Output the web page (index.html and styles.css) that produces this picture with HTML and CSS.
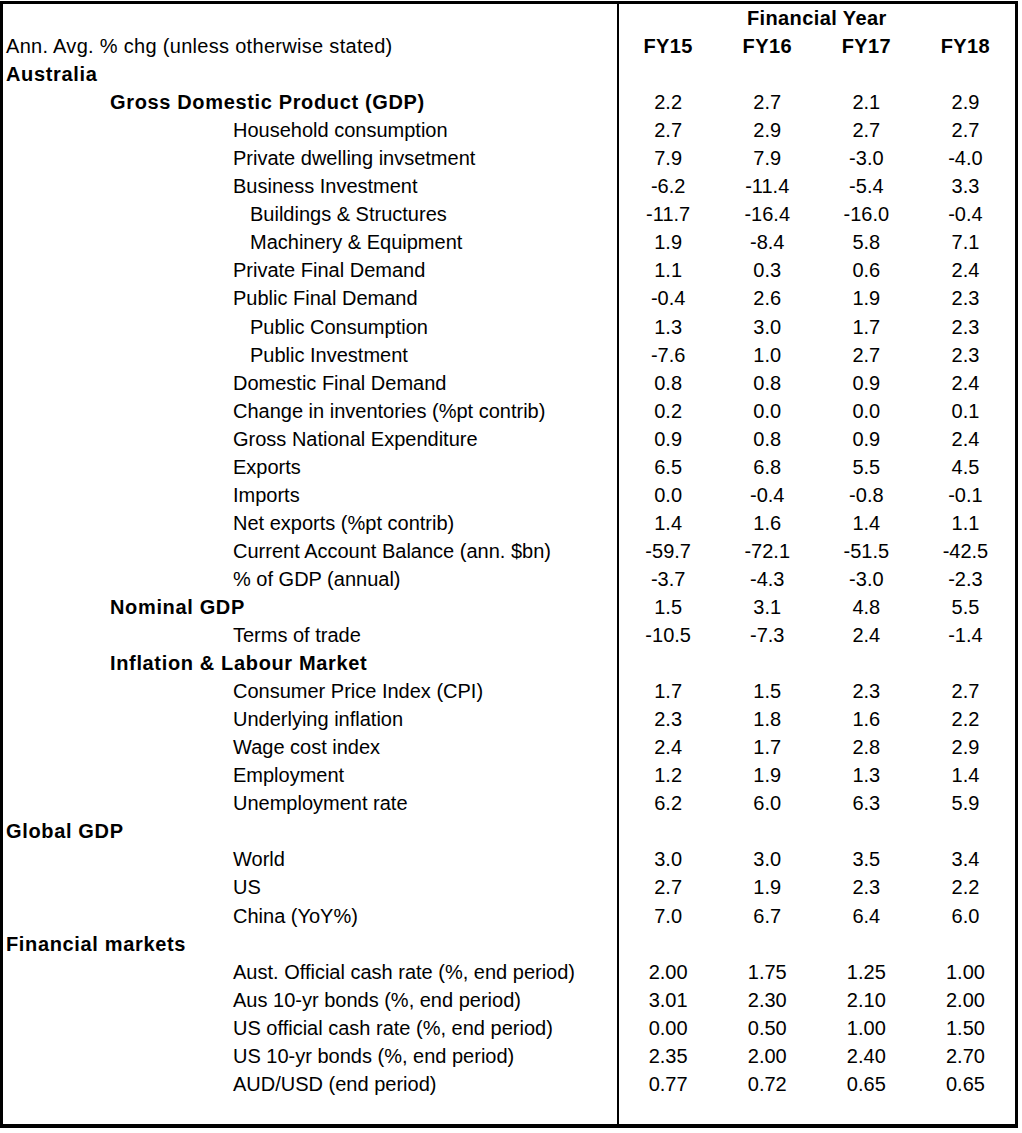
FILE: index.html
```html
<!DOCTYPE html>
<html lang="en">
<head>
    <meta charset="UTF-8">
    <title>Economic Forecasts</title>
    <link rel="stylesheet" href="styles.css">
</head>
<body>
    <table class="forecast">
        <colgroup>
            <col class="col-label">
            <col class="col-year">
            <col class="col-year">
            <col class="col-year">
            <col class="col-year">
        </colgroup>
        <thead>
            <tr>
                <th class="label"></th>
                <th colspan="4" class="group">Financial Year</th>
            </tr>
            <tr>
                <th class="label plain lvl0">Ann. Avg. % chg (unless otherwise stated)</th>
                <th>FY15</th>
                <th>FY16</th>
                <th>FY17</th>
                <th>FY18</th>
            </tr>
        </thead>
        <tbody>
            <tr><td class="label lvl0 head">Australia</td><td></td><td></td><td></td><td></td></tr>
            <tr><td class="label lvl1 head">Gross Domestic Product (GDP)</td><td>2.2</td><td>2.7</td><td>2.1</td><td>2.9</td></tr>
            <tr><td class="label lvl2">Household consumption</td><td>2.7</td><td>2.9</td><td>2.7</td><td>2.7</td></tr>
            <tr><td class="label lvl2">Private dwelling invsetment</td><td>7.9</td><td>7.9</td><td>-3.0</td><td>-4.0</td></tr>
            <tr><td class="label lvl2">Business Investment</td><td>-6.2</td><td>-11.4</td><td>-5.4</td><td>3.3</td></tr>
            <tr><td class="label lvl3">Buildings &amp; Structures</td><td>-11.7</td><td>-16.4</td><td>-16.0</td><td>-0.4</td></tr>
            <tr><td class="label lvl3">Machinery &amp; Equipment</td><td>1.9</td><td>-8.4</td><td>5.8</td><td>7.1</td></tr>
            <tr><td class="label lvl2">Private Final Demand</td><td>1.1</td><td>0.3</td><td>0.6</td><td>2.4</td></tr>
            <tr><td class="label lvl2">Public Final Demand</td><td>-0.4</td><td>2.6</td><td>1.9</td><td>2.3</td></tr>
            <tr><td class="label lvl3">Public Consumption</td><td>1.3</td><td>3.0</td><td>1.7</td><td>2.3</td></tr>
            <tr><td class="label lvl3">Public Investment</td><td>-7.6</td><td>1.0</td><td>2.7</td><td>2.3</td></tr>
            <tr><td class="label lvl2">Domestic Final Demand</td><td>0.8</td><td>0.8</td><td>0.9</td><td>2.4</td></tr>
            <tr><td class="label lvl2">Change in inventories (%pt contrib)</td><td>0.2</td><td>0.0</td><td>0.0</td><td>0.1</td></tr>
            <tr><td class="label lvl2">Gross National Expenditure</td><td>0.9</td><td>0.8</td><td>0.9</td><td>2.4</td></tr>
            <tr><td class="label lvl2">Exports</td><td>6.5</td><td>6.8</td><td>5.5</td><td>4.5</td></tr>
            <tr><td class="label lvl2">Imports</td><td>0.0</td><td>-0.4</td><td>-0.8</td><td>-0.1</td></tr>
            <tr><td class="label lvl2">Net exports (%pt contrib)</td><td>1.4</td><td>1.6</td><td>1.4</td><td>1.1</td></tr>
            <tr><td class="label lvl2">Current Account Balance (ann. $bn)</td><td>-59.7</td><td>-72.1</td><td>-51.5</td><td>-42.5</td></tr>
            <tr><td class="label lvl2">% of GDP (annual)</td><td>-3.7</td><td>-4.3</td><td>-3.0</td><td>-2.3</td></tr>
            <tr><td class="label lvl1 head">Nominal GDP</td><td>1.5</td><td>3.1</td><td>4.8</td><td>5.5</td></tr>
            <tr><td class="label lvl2">Terms of trade</td><td>-10.5</td><td>-7.3</td><td>2.4</td><td>-1.4</td></tr>
            <tr><td class="label lvl1 head">Inflation &amp; Labour Market</td><td></td><td></td><td></td><td></td></tr>
            <tr><td class="label lvl2">Consumer Price Index (CPI)</td><td>1.7</td><td>1.5</td><td>2.3</td><td>2.7</td></tr>
            <tr><td class="label lvl2">Underlying inflation</td><td>2.3</td><td>1.8</td><td>1.6</td><td>2.2</td></tr>
            <tr><td class="label lvl2">Wage cost index</td><td>2.4</td><td>1.7</td><td>2.8</td><td>2.9</td></tr>
            <tr><td class="label lvl2">Employment</td><td>1.2</td><td>1.9</td><td>1.3</td><td>1.4</td></tr>
            <tr><td class="label lvl2">Unemployment rate</td><td>6.2</td><td>6.0</td><td>6.3</td><td>5.9</td></tr>
            <tr><td class="label lvl0 head">Global GDP</td><td></td><td></td><td></td><td></td></tr>
            <tr><td class="label lvl2">World</td><td>3.0</td><td>3.0</td><td>3.5</td><td>3.4</td></tr>
            <tr><td class="label lvl2">US</td><td>2.7</td><td>1.9</td><td>2.3</td><td>2.2</td></tr>
            <tr><td class="label lvl2">China (YoY%)</td><td>7.0</td><td>6.7</td><td>6.4</td><td>6.0</td></tr>
            <tr><td class="label lvl0 head">Financial markets</td><td></td><td></td><td></td><td></td></tr>
            <tr><td class="label lvl2">Aust. Official cash rate (%, end period)</td><td>2.00</td><td>1.75</td><td>1.25</td><td>1.00</td></tr>
            <tr><td class="label lvl2">Aus 10-yr bonds (%, end period)</td><td>3.01</td><td>2.30</td><td>2.10</td><td>2.00</td></tr>
            <tr><td class="label lvl2">US official cash rate (%, end period)</td><td>0.00</td><td>0.50</td><td>1.00</td><td>1.50</td></tr>
            <tr><td class="label lvl2">US 10-yr bonds (%, end period)</td><td>2.35</td><td>2.00</td><td>2.40</td><td>2.70</td></tr>
            <tr><td class="label lvl2">AUD/USD (end period)</td><td>0.77</td><td>0.72</td><td>0.65</td><td>0.65</td></tr>
            <tr class="spacer"><td class="label"></td><td></td><td></td><td></td><td></td></tr>
        </tbody>
    </table>
</body>
</html>
```

FILE: styles.css
```css
* {
    margin: 0;
    padding: 0;
    box-sizing: border-box;
}

body {
    font-family: 'Liberation Sans', Arial, sans-serif;
    font-size: 20px;
    color: #000;
    background: #fff;
    padding-top: 1px;
}

.forecast {
    width: 1018px;
    table-layout: fixed;
    border-collapse: separate;
    border-spacing: 0;
    border-top: 3px solid #000;
    border-left: 3px solid #000;
    border-right: 3px solid #000;
    border-bottom: 4px solid #000;
}

.col-label {
    width: 615px;
}

.col-year {
    width: 99px;
}

.forecast th,
.forecast td {
    height: 28.05px;
    line-height: 28px;
    padding: 0;
    text-align: center;
    white-space: nowrap;
    vertical-align: middle;
}

.forecast th {
    font-weight: bold;
    letter-spacing: 0.4px;
}

.forecast .label {
    text-align: left;
    border-right: 2px solid #000;
}

.forecast .plain {
    font-weight: normal;
    letter-spacing: 0.3px;
}

.forecast .head {
    font-weight: bold;
    letter-spacing: 0.65px;
}

.lvl0 { padding-left: 3px !important; }
.lvl1 { padding-left: 107px !important; }
.lvl2 { padding-left: 230px !important; }
.lvl3 { padding-left: 247px !important; }

.forecast .spacer td {
    height: 26px;
}
```
